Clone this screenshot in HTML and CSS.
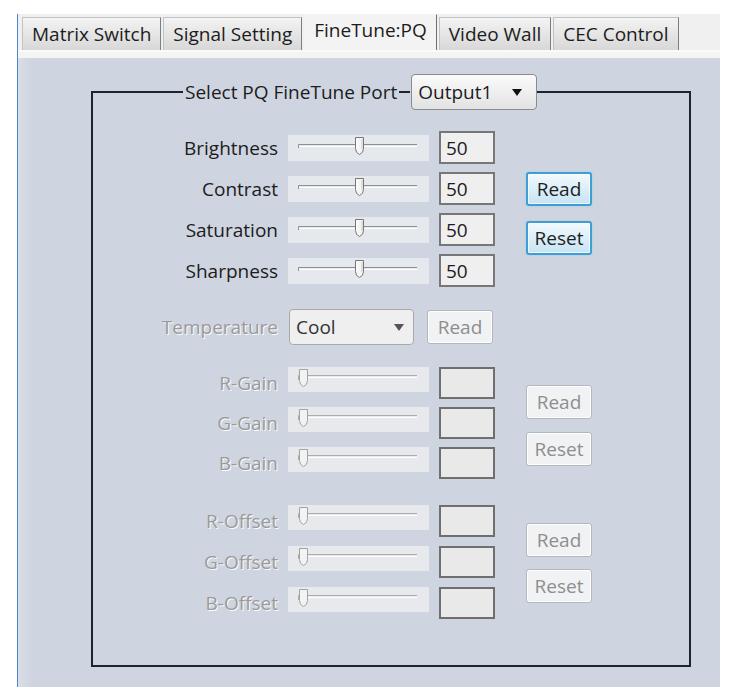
FILE: index.html
```html
<!DOCTYPE html>
<html lang="en">
<head>
  <meta charset="UTF-8" />
  <title>FineTune:PQ</title>
  <link rel="stylesheet" href="styles.css">
</head>
<body>

<svg class="defs" width="0" height="0">
  <symbol id="knob" viewBox="0 0 9 18">
    <path d="M0.5 0.5H8.5V11.5Q8.5 16 4.5 17.5Q0.5 16 0.5 11.5Z" fill="#f5f5f5" stroke="#777" />
    <path d="M2 2V12" stroke="#fff" />
    <path d="M7 2V12" stroke="#c8c8c8" />
  </symbol>
  <symbol id="knob-off" viewBox="0 0 9 18">
    <path d="M0.5 0.5H8.5V11.5Q8.5 16 4.5 17.5Q0.5 16 0.5 11.5Z" fill="#f3f3f3" stroke="#a3a3a3" />
  </symbol>
</svg>

<div class="window">
  <nav class="tabs">
    <div class="tab">Matrix Switch</div>
    <div class="tab">Signal Setting</div>
    <div class="tab active">FineTune:PQ</div>
    <div class="tab">Video Wall</div>
    <div class="tab">CEC Control</div>
  </nav>
  <div class="tab-edge"></div>

  <div class="panel">
    <fieldset class="group">
      <legend class="group-title">
        <span>Select PQ FineTune Port</span>
        <span class="tick"></span>
        <div class="combo port">Output1<span class="arrow"></span></div>
      </legend>

      <!-- picture controls -->
      <section class="block main">
        <div class="rows">
          <label>Brightness</label>
          <div class="slider"><svg width="141" height="26"><path d="M10.5 13V9.5H129" stroke="#8f8f8f" fill="none"/><path d="M11 11.5H129" stroke="#fff"/><use href="#knob" x="67" y="2" width="9" height="18"/></svg></div>
          <div class="field">50</div>

          <label>Contrast</label>
          <div class="slider"><svg width="141" height="26"><path d="M10.5 13V9.5H129" stroke="#8f8f8f" fill="none"/><path d="M11 11.5H129" stroke="#fff"/><use href="#knob" x="67" y="2" width="9" height="18"/></svg></div>
          <div class="field">50</div>

          <label>Saturation</label>
          <div class="slider"><svg width="141" height="26"><path d="M10.5 13V9.5H129" stroke="#8f8f8f" fill="none"/><path d="M11 11.5H129" stroke="#fff"/><use href="#knob" x="67" y="2" width="9" height="18"/></svg></div>
          <div class="field">50</div>

          <label>Sharpness</label>
          <div class="slider"><svg width="141" height="26"><path d="M10.5 13V9.5H129" stroke="#8f8f8f" fill="none"/><path d="M11 11.5H129" stroke="#fff"/><use href="#knob" x="67" y="2" width="9" height="18"/></svg></div>
          <div class="field">50</div>
        </div>
        <div class="actions">
          <button class="btn">Read</button>
          <button class="btn">Reset</button>
        </div>
      </section>

      <!-- colour temperature -->
      <section class="temp-row">
        <label class="off">Temperature</label>
        <div class="combo temp">Cool<span class="arrow"></span></div>
        <button class="btn" disabled>Read</button>
      </section>

      <section class="block gain">
        <div class="rows">
          <label class="off">R-Gain</label>
          <div class="slider"><svg width="141" height="25"><path d="M10.5 13V8.5H129" stroke="#acacac" fill="none"/><path d="M11 10.5H129" stroke="#fff"/><use href="#knob-off" x="11" y="2" width="9" height="18"/></svg></div>
          <div class="field"></div>

          <label class="off">G-Gain</label>
          <div class="slider"><svg width="141" height="25"><path d="M10.5 13V8.5H129" stroke="#acacac" fill="none"/><path d="M11 10.5H129" stroke="#fff"/><use href="#knob-off" x="11" y="2" width="9" height="18"/></svg></div>
          <div class="field"></div>

          <label class="off">B-Gain</label>
          <div class="slider"><svg width="141" height="25"><path d="M10.5 13V8.5H129" stroke="#acacac" fill="none"/><path d="M11 10.5H129" stroke="#fff"/><use href="#knob-off" x="11" y="2" width="9" height="18"/></svg></div>
          <div class="field"></div>
        </div>
        <div class="actions">
          <button class="btn" disabled>Read</button>
          <button class="btn" disabled>Reset</button>
        </div>
      </section>

      <section class="block offset">
        <div class="rows">
          <label class="off">R-Offset</label>
          <div class="slider"><svg width="141" height="25"><path d="M10.5 13V8.5H129" stroke="#acacac" fill="none"/><path d="M11 10.5H129" stroke="#fff"/><use href="#knob-off" x="11" y="2" width="9" height="18"/></svg></div>
          <div class="field"></div>

          <label class="off">G-Offset</label>
          <div class="slider"><svg width="141" height="25"><path d="M10.5 13V8.5H129" stroke="#acacac" fill="none"/><path d="M11 10.5H129" stroke="#fff"/><use href="#knob-off" x="11" y="2" width="9" height="18"/></svg></div>
          <div class="field"></div>

          <label class="off">B-Offset</label>
          <div class="slider"><svg width="141" height="25"><path d="M10.5 13V8.5H129" stroke="#acacac" fill="none"/><path d="M11 10.5H129" stroke="#fff"/><use href="#knob-off" x="11" y="2" width="9" height="18"/></svg></div>
          <div class="field"></div>
        </div>
        <div class="actions">
          <button class="btn" disabled>Read</button>
          <button class="btn" disabled>Reset</button>
        </div>
      </section>
    </fieldset>
  </div>
</div>

</body>
</html>
```

FILE: styles.css
```css
* { box-sizing: border-box; }
body { margin: 0; background: #fff; font-family: "Open Sans", "Liberation Sans", sans-serif; font-size: 19px; color: #1c1c1c; }
.defs { position: absolute; }

.window { margin: 14px 0 0 17px; width: 703px; height: 673px; border-left: 1px solid #4f86cf; display: flex; flex-direction: column; }

/* tab strip */
.tabs { display: flex; align-items: flex-end; gap: 2px; height: 36px; padding-left: 4px; background: #f0f0f0; }
.tab { height: 33px; padding: 0 9px; display: flex; align-items: center; background: linear-gradient(#f3f3f3, #d8d8d8); border: 1px solid #c2c2c2; border-bottom: 0; border-right-color: #7d7d7d; white-space: nowrap; }
.tab.active { height: 36px; padding-bottom: 6px; background: #f3f3f3; border-color: transparent #6f6f6f transparent transparent; }
.tab-edge { height: 8px; background: #f4f4f4; border-top: 2px solid #fafafa; }

.panel { flex: 1; padding: 16px 0 0 73px; background: linear-gradient(to right, #d9dee6, #ced5e0 14px); }

/* group box */
.group { width: 600px; margin: 0; padding: 0 0 46px 0; border: 2px solid #1d2330; }
.group-title { display: flex; align-items: center; margin-left: 90px; padding: 0 0 0 2px; }
.tick { width: 11px; height: 2px; margin: 0 1px 0 2px; background: #1d2330; }

.combo { position: relative; display: flex; align-items: center; border-radius: 4px; }
.combo .arrow { position: absolute; top: 50%; margin-top: -3px; width: 0; height: 0; border-left: 5px solid transparent; border-right: 5px solid transparent; border-top: 7px solid #111; }
.combo.port { width: 126px; height: 36px; padding-left: 6px; border: 1px solid #8c8c8c; background: linear-gradient(#fbfbfb, #e2e2e2); }
.combo.port .arrow { right: 14px; }
.combo.temp { width: 125px; height: 36px; padding-left: 6px; border: 1px solid #a9a9a9; background: #efefef; color: #333; }
.combo.temp .arrow { right: 9px; border-top-color: #555; }

/* rows */
.block { display: flex; align-items: flex-start; }
.rows { display: grid; grid-template-columns: 185px 141px 56px; column-gap: 10px; row-gap: 8px; align-items: center; }
.rows label, .temp-row label { text-align: right; white-space: nowrap; }
.slider { height: 26px; background: #e5e8ed; }
.slider svg { display: block; }
.field { height: 33px; padding: 2px 0 0 5px; border: 2px solid #777; background: #efefef; line-height: 26px; }

.off { color: #9a9a9a; text-shadow: 1px 1px 0 #fbfbfb; }

.main { margin-top: 21px; }
.gain { margin-top: 22px; }
.offset { margin-top: 26px; }
.gain .slider, .offset .slider { height: 25px; align-self: start; background: #e7e9ed; }
.gain .field, .offset .field { height: 32px; background: #e9e9e9; border-color: #6f6f6f; }
.offset .rows { row-gap: 9px; }

.temp-row { display: flex; align-items: center; margin-top: 22px; }
.temp-row label { width: 185px; margin-right: 11px; }
.temp-row .btn { margin-left: 13px; }

.actions { display: flex; flex-direction: column; margin-left: 31px; padding-top: 18px; gap: 13px; }
.main .actions { padding-top: 41px; gap: 15px; }
.offset .actions { gap: 12px; }

.btn { width: 66px; height: 34px; padding: 0; font: inherit; color: #1e1e1e; border: 2px solid #3f9fd4; border-radius: 3px; background: linear-gradient(#f2f9fd, #c6e4f3); box-shadow: inset 0 0 0 1px rgba(255,255,255,0.7), 0 0 2px #8ccbec; }
.btn:disabled { color: #8e8e8e; border: 1px solid #b3b7bd; background: #f1f2f4; box-shadow: inset 0 0 0 1px #fff; }
```
